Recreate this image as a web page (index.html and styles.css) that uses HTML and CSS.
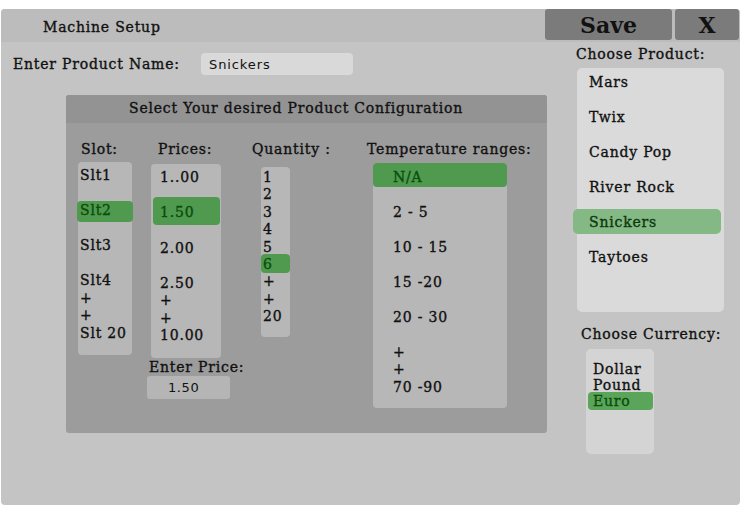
FILE: index.html
```html
<!DOCTYPE html>
<html>
<head>
<meta charset="utf-8">
<title>Machine Setup</title>
<link rel="stylesheet" href="styles.css">
</head>
<body>
<div class="app">
  <header class="topbar">
    <div class="title">Machine Setup</div>
    <button class="btn save">Save</button>
    <button class="btn close">X</button>
  </header>
  <div class="main">
    <section class="left">
      <div class="name-row">
        <span class="name-label">Enter Product Name:</span>
        <div class="name-input">Snickers</div>
      </div>
      <div class="config">
        <div class="config-head">Select Your desired Product Configuration</div>
        <div class="cols">
          <div class="col col-slot">
            <div class="col-label">Slot:</div>
            <div class="box slot-box">
              <div class="it">Slt1</div>
              <div class="it"></div>
              <div class="it sel">Slt2</div>
              <div class="it"></div>
              <div class="it">Slt3</div>
              <div class="it"></div>
              <div class="it">Slt4</div>
              <div class="it">+</div>
              <div class="it">+</div>
              <div class="it">Slt 20</div>
            </div>
          </div>
          <div class="col col-price">
            <div class="col-label">Prices:</div>
            <div class="box price-box">
              <div class="it">1..00</div>
              <div class="it"></div>
              <div class="it sel">1.50</div>
              <div class="it"></div>
              <div class="it">2.00</div>
              <div class="it"></div>
              <div class="it">2.50</div>
              <div class="it">+</div>
              <div class="it">+</div>
              <div class="it">10.00</div>
            </div>
            <div class="price-label">Enter Price:</div>
            <div class="price-input">1.50</div>
          </div>
          <div class="col col-qty">
            <div class="col-label">Quantity :</div>
            <div class="box qty-box">
              <div class="it">1</div>
              <div class="it">2</div>
              <div class="it">3</div>
              <div class="it">4</div>
              <div class="it">5</div>
              <div class="it sel">6</div>
              <div class="it">+</div>
              <div class="it">+</div>
              <div class="it">20</div>
            </div>
          </div>
          <div class="col col-temp">
            <div class="col-label">Temperature ranges:</div>
            <div class="box temp-box">
              <div class="it sel">N/A</div>
              <div class="it"></div>
              <div class="it">2 - 5</div>
              <div class="it"></div>
              <div class="it">10 - 15</div>
              <div class="it"></div>
              <div class="it">15 -20</div>
              <div class="it"></div>
              <div class="it">20 - 30</div>
              <div class="it"></div>
              <div class="it">+</div>
              <div class="it">+</div>
              <div class="it">70 -90</div>
            </div>
          </div>
        </div>
      </div>
    </section>
    <aside class="right">
      <div class="r-label prod-label">Choose Product:</div>
      <div class="prod-box">
        <div class="pit">Mars</div>
        <div class="pit">Twix</div>
        <div class="pit">Candy Pop</div>
        <div class="pit">River Rock</div>
        <div class="pit psel">Snickers</div>
        <div class="pit">Taytoes</div>
      </div>
      <div class="r-label cur-label">Choose Currency:</div>
      <div class="cur-box">
        <div class="cit">Dollar</div>
        <div class="cit">Pound</div>
        <div class="cit csel">Euro</div>
      </div>
    </aside>
  </div>
</div>
</body>
</html>
```
FILE: styles.css
```css
* { box-sizing: border-box; }
html, body { margin: 0; padding: 0; background: #ffffff; }
body {
  font-family: "DejaVu Serif", serif;
  font-size: 14px;
  color: #111;
}
.app {
  margin: 9px 0 0 1px;
  width: 739px;
  height: 496px;
  background: #c4c4c4;
  border-radius: 4px;
  display: flex;
  flex-direction: column;
  overflow: hidden;
  letter-spacing: 0.8px;
  -webkit-text-stroke: 0.35px currentColor;
}
.topbar {
  display: flex;
  height: 33px;
  background: #bcbcbc;
  align-items: flex-start;
}
.title {
  flex: 1;
  padding-left: 42px;
  line-height: 36px;
  font-size: 14px;
}
.btn {
  border: none;
  background: #7b7b7b;
  height: 31px;
  font-family: "DejaVu Serif", serif;
  font-weight: bold;
  font-size: 22px;
  letter-spacing: 0;
  -webkit-text-stroke: 0;
  color: #111;
  border-radius: 3px;
  padding: 0;
}
.save { width: 127px; }
.close { width: 64px; margin-left: 3px; margin-right: 1px; }
.main { display: flex; flex: 1; }
.left { width: 559px; }
.name-row {
  display: flex;
  align-items: center;
  margin-top: 11px;
  height: 22px;
}
.name-label { width: 200px; padding-left: 12px; line-height: 20px; }
.name-input {
  width: 152px;
  height: 22px;
  background: #d9d9d9;
  border-radius: 4px;
  font-family: "DejaVu Sans", sans-serif;
  font-size: 13px;
  letter-spacing: 0.9px;
  -webkit-text-stroke: 0;
  line-height: 24px;
  padding-left: 8px;
}
.config {
  margin: 20px 0 0 65px;
  width: 481px;
  height: 338px;
  background: #9c9c9c;
  border-radius: 3px;
}
.config-head {
  height: 28px;
  background: #939393;
  border-radius: 3px 3px 0 0;
  line-height: 27px;
  padding-left: 63px;
  white-space: nowrap;
}
.cols { display: flex; padding-top: 18px; }
.col-label { line-height: 17px; white-space: nowrap; }
.col-slot { margin-left: 12px; width: 54px; }
.col-slot .col-label { padding-left: 3px; }
.col-price { margin-left: 15px; width: 95px; }
.col-price .col-label { padding-left: 11px; }
.col-qty { margin-left: 10px; width: 80px; }
.col-temp { margin-left: 35px; width: 165px; }
.box { background: #b7b7b7; border-radius: 4px; }
.it { height: 17.5px; line-height: 18.5px; white-space: nowrap; }
.sel { background: #4f9a4f; color: #0b4d0b; border-radius: 4px; }
.slot-box { margin-top: 4px; height: 193px; padding: 4px 0 0 2px; }
.slot-box .sel { padding-bottom: 3.5px; height: 21px; margin: 0 -1px -3.5px -3px; padding-left: 3px; }
.price-box { margin: 6px 0 0 4px; width: 70px; height: 194px; padding: 4px 0 0 9px; }
.price-box .sel { margin: -6px 1px -4px -7px; padding: 6px 0 4px 7px; height: 28px; }
.price-label { margin-top: 1px; padding-left: 2px; line-height: 16px; white-space: nowrap; }
.price-input {
  width: 83px;
  height: 23px;
  margin-top: 1px;
  background: #b5b5b5;
  border-radius: 3px;
  font-family: "DejaVu Sans", sans-serif;
  font-size: 13px;
  letter-spacing: 0.6px;
  -webkit-text-stroke: 0;
  line-height: 24px;
  padding-left: 21px;
}
.qty-box { margin: 9px 0 0 9px; width: 29px; height: 170px; padding: 1px 0 0 2px; }
.qty-box .it { height: 17.4px; line-height: 18.4px; }
.qty-box .sel { margin: -1px 0 -0.6px -2px; padding: 1px 0 0 2px; height: 19px; }
.temp-box { margin: 5px 0 0 6px; width: 134px; height: 245px; padding: 5px 0 0 20px; }
.temp-box .sel { margin: -5px 0 -2px -20px; padding: 5px 0 0 20px; height: 24px; }
.right { flex: 1; display: flex; flex-direction: column; }
.r-label { line-height: 17px; white-space: nowrap; }
.prod-label { margin-top: 4px; padding-left: 16px; }
.prod-box {
  margin: 5px 0 0 17px;
  width: 147px;
  height: 244px;
  background: #dadada;
  border-radius: 5px;
  padding: 4px 0 0 12px;
}
.pit { height: 35px; line-height: 21px; }
.psel {
  background: #84b884;
  color: #0c3a0c;
  border-radius: 5px;
  margin: -3px 3px 0 -16px;
  padding: 3px 0 0 16px;
  height: 25px;
  margin-bottom: 13px;
}
.cur-label { margin-top: 14px; padding-left: 21px; }
.cur-box {
  margin: 6px 0 0 26px;
  width: 68px;
  height: 105px;
  background: #d4d4d4;
  border-radius: 5px;
  padding: 12px 0 0 7px;
}
.cit { height: 16px; line-height: 17px; }
.csel {
  background: #5aa55a;
  color: #0b4d0b;
  border-radius: 4px;
  margin: -1px 1px 0 -5px;
  padding: 1px 0 0 5px;
  height: 18px;
}
```
